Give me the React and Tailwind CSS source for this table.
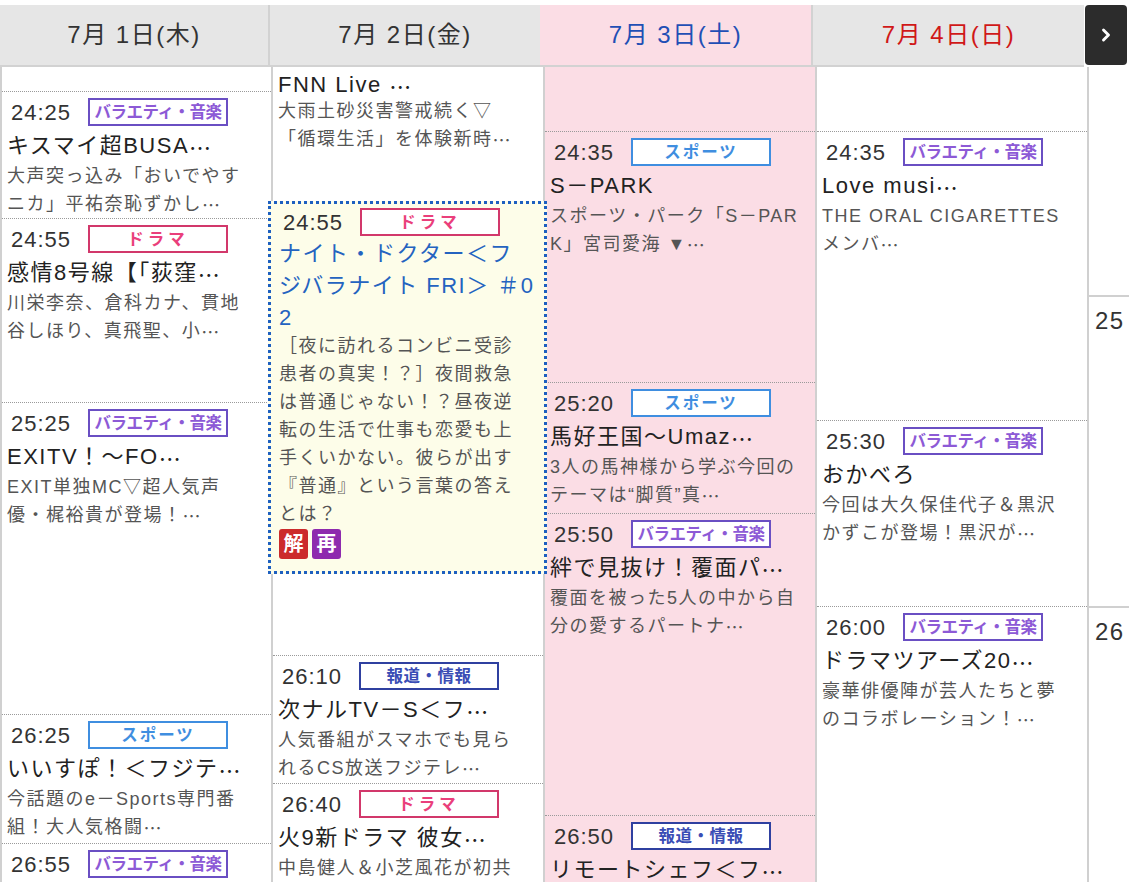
import React from "react";
import { ChevronRight } from "lucide-react";

const BADGES = {
  var: { label: "バラエティ・音楽", cls: "border-[#6a4fc3] text-[#8d5ad6] tracking-[-0.5px]" },
  drama: { label: "ドラマ", cls: "border-[#d2386b] text-[#ea3f7b] tracking-[4px]" },
  sports: { label: "スポーツ", cls: "border-[#3f8ee0] text-[#3f8ee0] tracking-[2px]" },
  news: { label: "報道・情報", cls: "border-[#2f40a0] text-[#3a4db5] tracking-[0.5px]" },
};

// centred japanese ellipsis, kept in its own box so it isn't shaped as latin
const T = ({ s }) => {
  const parts = s.split("…");
  return parts.map((p, i) => (
    <React.Fragment key={i}>
      {p}
      {i < parts.length - 1 && (
        <span lang="ja" className="inline-block align-top font-['Noto_Sans_CJK_JP',sans-serif] tracking-normal">
          …
        </span>
      )}
    </React.Fragment>
  ));
};

const Badge = ({ g }) => {
  const b = BADGES[g];
  return (
    <span
      className={`flex items-center justify-center w-[140px] h-[28px] border-2 bg-white text-[16.5px] font-bold leading-none ${b.cls}`}
    >
      {b.label}
    </span>
  );
};

const Program = ({ p }) => (
  <div className={`${p.h} shrink-0 border-t border-dotted border-[#9a9a9a] pl-[5px] overflow-hidden`}>
    <div className="mt-[6px] flex items-center h-[28px]">
      <span className="pl-[4px] w-[81px] text-[22px] tracking-[1px] text-[#333]">{p.time}</span>
      <Badge g={p.g} />
    </div>
    {p.title && (
      <div className="mt-[4px] text-[22px] leading-[32px] text-[#222] whitespace-nowrap">
        <T s={p.title} />
      </div>
    )}
    {p.desc &&
      p.desc.map((d, i) => (
        <div key={i} className="text-[18px] leading-[28px] text-[#555] whitespace-nowrap">
          <T s={d} />
        </div>
      ))}
  </div>
);

const col1 = [
  { h: "h-[127px]", time: "24:25", g: "var", title: "キスマイ超BUSA…", desc: ["大声突っ込み「おいでやす", "ニカ」平祐奈恥ずかし…"] },
  { h: "h-[184px]", time: "24:55", g: "drama", title: "感情8号線【「荻窪…", desc: ["川栄李奈、倉科カナ、貫地", "谷しほり、真飛聖、小…"] },
  { h: "h-[312px]", time: "25:25", g: "var", title: "EXITV！〜FO…", desc: ["EXIT単独MC▽超人気声", "優・梶裕貴が登場！…"] },
  { h: "h-[129px]", time: "26:25", g: "sports", title: "いいすぽ！＜フジテ…", desc: ["今話題のe－Sports専門番", "組！大人気格闘…"] },
  { h: "flex-1", time: "26:55", g: "var" },
];

const col2 = [
  { h: "h-[128px]", time: "26:10", g: "news", title: "次ナルTV－S＜フ…", desc: ["人気番組がスマホでも見ら", "れるCS放送フジテレ…"] },
  { h: "flex-1", time: "26:40", g: "drama", title: "火9新ドラマ 彼女…", desc: ["中島健人＆小芝風花が初共"] },
];

const col3 = [
  { h: "h-[251px]", time: "24:35", g: "sports", title: "S－PARK", desc: ["スポーツ・パーク「S－PAR", "K」宮司愛海 ▼…"] },
  { h: "h-[131px]", time: "25:20", g: "sports", title: "馬好王国〜Umaz…", desc: ["3人の馬神様から学ぶ今回の", "テーマは“脚質”真…"] },
  { h: "h-[302px]", time: "25:50", g: "var", title: "絆で見抜け！覆面パ…", desc: ["覆面を被った5人の中から自", "分の愛するパートナ…"] },
  { h: "flex-1", time: "26:50", g: "news", title: "リモートシェフ＜フ…" },
];

const col4 = [
  { h: "h-[289px]", time: "24:35", g: "var", title: "Love musi…", desc: ["THE ORAL CIGARETTES", "メンバ…"] },
  { h: "h-[186px]", time: "25:30", g: "var", title: "おかべろ", desc: ["今回は大久保佳代子＆黒沢", "かずこが登場！黒沢が…"] },
  { h: "flex-1", time: "26:00", g: "var", title: "ドラマツアーズ20…", desc: ["豪華俳優陣が芸人たちと夢", "のコラボレーション！…"] },
];

const highlightDesc = [
  "［夜に訪れるコンビニ受診",
  "患者の真実！？］夜間救急",
  "は普通じゃない！？昼夜逆",
  "転の生活で仕事も恋愛も上",
  "手くいかない。彼らが出す",
  "『普通』という言葉の答え",
  "とは？",
];

export default function App() {
  return (
    <div className="w-[1129px] h-[882px] overflow-hidden bg-white font-['Liberation_Sans','Noto_Sans_CJK_JP',sans-serif] tracking-[1.5px]">
      {/* date header */}
      <div className="flex pt-[5px] h-[67px]">
        <div className="w-[270px] flex items-center justify-center bg-[#e6e6e6] border-r-2 border-b-2 border-[#d2d2d2] text-[24px] text-[#333]">
          7月 1日(木)
        </div>
        <div className="w-[270px] flex items-center justify-center bg-[#e6e6e6] border-b-2 border-[#d2d2d2] text-[24px] text-[#333]">
          7月 2日(金)
        </div>
        <div className="w-[273px] flex items-center justify-center bg-[#fbdde5] border-r-2 border-b-2 border-[#d2d2d2] text-[24px] text-[#1f4fb5]">
          7月 3日(土)
        </div>
        <div className="w-[271px] flex items-center justify-center bg-[#e6e6e6] border-b-2 border-[#d2d2d2] text-[24px] text-[#d01818]">
          7月 4日(日)
        </div>
        <div className="ml-[1px] w-[42px] h-[60px] flex items-center justify-center bg-[#2c2c2c] rounded-[4px]">
          <ChevronRight size={20} strokeWidth={3.5} className="text-white" />
        </div>
      </div>

      {/* programme grid */}
      <div className="flex h-[815px]">
        <div className="w-[271px] h-full flex flex-col border-l-2 border-[#d0d0d0] overflow-hidden">
          <div className="h-[24px] shrink-0" />
          {col1.map((p, i) => (
            <Program key={i} p={p} />
          ))}
        </div>

        <div className="w-[272px] h-full flex flex-col border-l-2 border-[#d0d0d0]">
          <div className="h-[134px] shrink-0 pl-[5px] pt-[4px] overflow-hidden">
            <div className="text-[22px] leading-[28px] text-[#222] whitespace-nowrap">
              <T s="FNN Live …" />
            </div>
            <div className="-mt-[2px] text-[18px] leading-[28px] text-[#555] whitespace-nowrap">大雨土砂災害警戒続く▽</div>
            <div className="text-[18px] leading-[28px] text-[#555] whitespace-nowrap">
              <T s="「循環生活」を体験新時…" />
            </div>
          </div>
          <div className="h-[454px] shrink-0">
            <div className="relative z-10 -ml-[5px] -mr-[4px] border-[3px] border-dotted border-[#1d5fc0] bg-[#fdfde9] pl-[8px] pb-[12px]">
              <div className="mt-[4px] flex items-center h-[28px]">
                <span className="pl-[4px] w-[81px] text-[22px] tracking-[1px] text-[#333]">24:55</span>
                <Badge g="drama" />
              </div>
              <div className="mt-[2px] text-[22px] leading-[32px] text-[#2463c0] whitespace-nowrap">
                <div>ナイト・ドクター＜フ</div>
                <div>ジバラナイト FRI＞ ＃0</div>
                <div>2</div>
              </div>
              <div className="-mt-[2px]">
                {highlightDesc.map((d, i) => (
                  <div key={i} className="text-[18px] leading-[28px] text-[#555] whitespace-nowrap">
                    {d}
                  </div>
                ))}
              </div>
              <div className="flex gap-[4px] mt-[1px]">
                <span className="w-[29px] h-[30px] flex items-center justify-center rounded-[3px] bg-[#cc2b2b] text-white text-[20px] font-bold tracking-normal">
                  解
                </span>
                <span className="w-[29px] h-[30px] flex items-center justify-center rounded-[3px] bg-[#8e2aae] text-white text-[20px] font-bold tracking-normal">
                  再
                </span>
              </div>
            </div>
          </div>
          {col2.map((p, i) => (
            <Program key={i} p={p} />
          ))}
        </div>

        <div className="w-[272px] h-full flex flex-col border-l-2 border-[#d0d0d0] bg-[#fbdde5] overflow-hidden">
          <div className="h-[64px] shrink-0" />
          {col3.map((p, i) => (
            <Program key={i} p={p} />
          ))}
        </div>

        <div className="w-[272px] h-full flex flex-col border-l-2 border-[#d0d0d0] overflow-hidden">
          <div className="h-[64px] shrink-0" />
          {col4.map((p, i) => (
            <Program key={i} p={p} />
          ))}
        </div>

        <div className="flex-1 h-full flex flex-col border-l-2 border-[#d0d0d0] text-[24px] text-[#333]">
          <div className="h-[228px] shrink-0" />
          <div className="h-[311px] shrink-0 border-t-2 border-[#d0d0d0] pl-[6px] pt-[6px]">25</div>
          <div className="flex-1 border-t-2 border-[#d0d0d0] pl-[6px] pt-[6px]">26</div>
        </div>
      </div>
    </div>
  );
}
